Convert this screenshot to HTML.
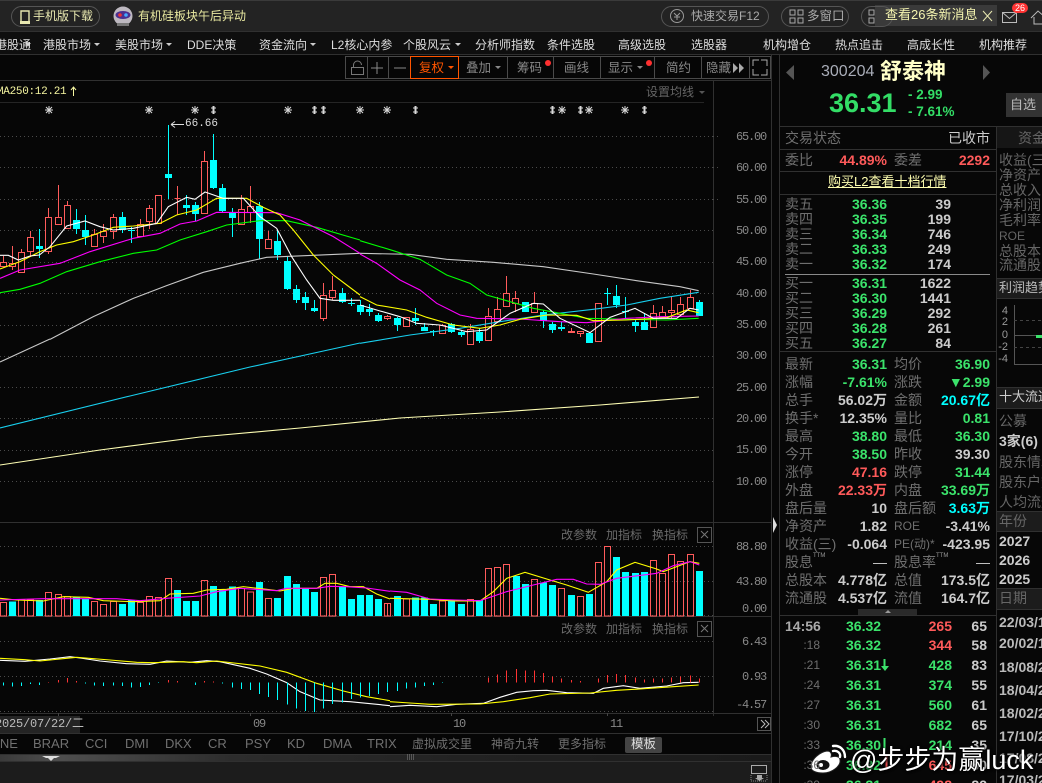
<!DOCTYPE html>
<html><head><meta charset="utf-8"><style>
html,body{margin:0;padding:0;background:#060606;width:1042px;height:783px;overflow:hidden}
#r{position:relative;width:1042px;height:783px;overflow:hidden;font-family:"Liberation Sans","WenQuanYi Zen Hei","Noto Sans CJK SC",sans-serif;font-size:14px;color:#ccc}
.a,.t span,.t b{position:absolute}
.t{position:absolute;left:0;top:0;width:1042px;height:783px;overflow:hidden}
.t span,.t b{line-height:16px;white-space:nowrap}
.n span{font-size:12px;color:#ddd;top:37px}
.tb span{font-size:12.5px;color:#888;top:60px}
.g{color:#6f6f6f}
.w{color:#ccc;font-weight:bold}
.gr{color:#3be36b;font-weight:bold}
.rd{color:#ff5a5a;font-weight:bold}
.cy{color:#0ff;font-weight:bold}
.ax span{font-family:"Liberation Mono",monospace;font-size:12px;letter-spacing:-1.2px;color:#888;text-align:right}
.p span{font-size:12px;color:#6a6a6a}
.tab span{font-size:13px;color:#707070;top:736px}
.c3 span{color:#666}
svg{position:absolute;left:0;top:0}
.pill{position:absolute;border:1px solid #555;border-radius:11px;height:19px;top:6px;box-sizing:content-box}
</style></head><body><div id="r">

<div class="a" style="left:0;top:0;width:1042px;height:31px;background:#232323"></div>
<div class="a" style="left:0;top:0;width:1042px;height:1px;background:#3a3a3a"></div>
<div class="a" style="left:0;top:32px;width:1042px;height:22px;background:#0e0e0e"></div>
<div class="a" style="left:0;top:761px;width:772px;height:22px;background:#1c1c1c"></div>
<div class="a" style="left:0;top:754px;width:772px;height:7px;background:linear-gradient(90deg,#3a3a3a,#4e4e4e 8%,#2c2c2c 30%,#222 60%,#1a1a1a)"></div>
<div class="a" style="left:780px;top:55px;width:262px;height:728px;background:#070707"></div>
<div class="a" style="left:996px;top:126px;width:46px;height:22px;background:#161616"></div>
<div class="a" style="left:997px;top:278px;width:45px;height:21px;background:#1c1c1c"></div>
<div class="a" style="left:997px;top:387px;width:45px;height:21px;background:#1c1c1c"></div>
<div class="a" style="left:997px;top:511px;width:45px;height:20px;background:#1c1c1c"></div>
<div class="a" style="left:997px;top:588px;width:45px;height:21px;background:#1c1c1c"></div>
<div class="a" style="left:858px;top:609px;width:59px;height:6px;background:#2a2a2a"></div>
<div class="a" style="left:1006px;top:93px;width:36px;height:24px;background:#333"></div>
<div class="a" style="left:0;top:716px;width:80px;height:17px;background:#242424"></div>
<div class="a" style="left:625px;top:737px;width:37px;height:16px;background:#444;border-radius:2px"></div>
<div class="a" style="left:875px;top:5px;width:122px;height:21px;background:#3a3a3a"></div>
<div class="pill" style="left:11px;width:87px"></div>
<div class="pill" style="left:661px;width:106px"></div>
<div class="pill" style="left:781px;width:66px"></div>
<div class="pill" style="left:861px;width:30px"></div>

<svg width="1042" height="783" viewBox="0 0 1042 783" fill="none">
<g stroke="#303030">
<path d="M0 31.5H1042M0 54.5H1042M0 80.5H771M0 522.5H771M0 616.5H771M0 713.5H771M0 733.5H771M0 754.5H771M0 761.5H771M771.5 55V783M779.5 55V783M779.5 126.5H1042M713.5 80V716"/>
<path d="M780 149.5H996M780 171.5H996M780 194.5H996M780 351.5H996M780 615.5H996M996.5 126V783M997 278.5H1042M997 298.5H1042M997 387.5H1042M997 408.5H1042M997 511.5H1042M997 531.5H1042M997 588.5H1042M997 609.5H1042"/>
</g>
<path d="M0 102.5H704" stroke="#252525"/>
<path d="M785 274.5H990" stroke="#8a8a8a"/>
<g stroke="#4a4a4a" stroke-dasharray="1 3">
<path d="M0 136.5H713M0 167.5H713M0 199.5H713M0 230.5H713M0 262.5H713M0 293.5H713M0 325.5H713M0 356.5H713M0 387.5H713M0 418.5H713M0 450.5H713M0 481.5H713M0 546.5H713M0 581.5H713M0 641.5H713M0 676.5H713M0 711.5H713M0 615.5H713"/>
<path d="M713 136.5H718M713 167.5H718M713 199.5H718"/>
</g>
<!-- toolbar boxes -->
<path d="M345.5 56.5H770.5V78.5H345.5ZM367.5 56V78M388.5 56V78M507.5 56V78M553.5 56V78M600.5 56V78M654.5 56V78M701.5 56V78M749.5 56V78" stroke="#4a4a4a"/>
<rect x="410.5" y="56.5" width="48" height="22" stroke="#ff5500" fill="#060606"/>
<!-- toolbar icons -->
<path d="M351.500 67.500h12v7h-12zM353.500 67v-2a4 4 0 0 1 8 0" stroke="#777"/>
<path d="M371 68h12M377 62v12M394 68h12" stroke="#888"/>
<circle cx="548" cy="63" r="3" fill="#ff3030"/><circle cx="649" cy="63" r="3" fill="#ff3030"/>
<path d="M448 66h6l-3 3z" fill="#ff5500"/>
<path d="M495 66h6l-3 3zM637 66h6l-3 3z" fill="#888"/>
<path d="M733 63l5 5-5 5zM739 63l5 5-5 5z" fill="#aaa"/>
<path d="M753 66v-6h6M767 66v-6h-6M753 69v6h6M767 69v6h-6" stroke="#aaa"/>
<path d="M25 43h6l-3 3zM94 43h6l-3 3zM166 43h6l-3 3zM310 43h6l-3 3zM455 43h6l-3 3z" fill="#ccc"/>
<path d="M699 91h6l-3 3z" fill="#555"/>
<!-- top bar icons -->
<path d="M21 11h8v12h-8z" stroke="#e8e8b0" stroke-width="1.4"/><path d="M20 21h10v3H20z" fill="#e8e8b0"/>
<circle cx="123" cy="16" r="9.5" fill="#bdb8c0"/><ellipse cx="123" cy="15" rx="7.5" ry="4" fill="#4a2f8f"/><circle cx="120" cy="15" r="1.8" fill="#e33"/><circle cx="126" cy="15" r="1.8" fill="#4af"/><path d="M117 23h12v3h-12z" fill="#777"/>
<circle cx="677" cy="16" r="6.5" stroke="#999"/><path d="M674 13l3 3 3-3M677 16v4M674 17h6" stroke="#999"/>
<path d="M790 10h5v5h-5zM798 10h5v5h-5zM790 18h5v5h-5zM798 18h5v5h-5z" stroke="#aaa"/>
<path d="M869 10h5v5h-5zM869 18h5v5h-5z" stroke="#aaa"/>
<path d="M983 11l9 10M992 11l-9 10" stroke="#e8e8b0"/>
<path d="M1002.5 12.5h14v10h-14zM1002.5 12.5l7 6 7-6" stroke="#bbb"/>
<rect x="1012" y="3" width="16" height="10" rx="5" fill="#f33"/>
<path d="M1031 18l7-7 8 7M1034 17v7h10" stroke="#bbb"/>
<!-- stock arrows -->
<path d="M794 65v15l-8-7.500zM983 65v15l7-7.500z" fill="#555"/>
<!-- star markers -->
<path stroke="#d8d8d8" d="M45 110h8M49 106v8M46 107l6 6M52 107l-6 6M145 110h8M149 106v8M146 107l6 6M152 107l-6 6M191 110h8M195 106v8M192 107l6 6M198 107l-6 6M284 110h8M288 106v8M285 107l6 6M291 107l-6 6M356 110h8M360 106v8M357 107l6 6M363 107l-6 6M383 110h8M387 106v8M384 107l6 6M390 107l-6 6M558 110h8M562 106v8M559 107l6 6M565 107l-6 6M585 110h8M589 106v8M586 107l6 6M592 107l-6 6M621 110h8M625 106v8M622 107l6 6M628 107l-6 6"/>
<path stroke="#d8d8d8" stroke-width="2" d="M213.500 106v8M314.500 106v8M323.500 106v8M415.500 106v8M552.500 106v8M580.500 106v8M644.500 106v8"/>
<path stroke="#d8d8d8" d="M211 108h5M211 112h5M312 108h5M312 112h5M321 108h5M321 112h5M413 108h5M413 112h5M550 108h5M550 112h5M578 108h5M578 112h5M642 108h5M642 112h5"/>
<path d="M73.500 96v-9M71 90l2.500-3 2.500 3" stroke="#f5f5a0"/>
<path d="M171 124.500h13M171 124.500l4-3M171 124.500l4 3" stroke="#ddd"/>

<!-- candles wicks -->
<path stroke="#ff5b5b" d="M3.500 256V267M12.500 246V270M21.500 249V273M30.500 231V257M48.500 208V254M58.500 185V225M67.500 201V229M94.500 229V247M103.500 224V243M113.500 214V239M140.500 219V237M149.500 205V229M158.500 195V224M177.500 186V215M204.500 151V214M241.500 195V225M250.500 186V223M268.500 231V249M323.500 283V321M332.500 276V300M387.500 315V320M406.500 317V327M442.500 324V334M470.500 324V345M488.500 308V340M497.500 297V322M506.500 276V307M515.500 291V312M534.500 292V313M571.500 328V333M580.500 331V337M598.500 303V342M653.500 305V328M662.500 306V318M671.500 297V318M680.500 297V315M690.500 290V309"/>
<path stroke="#ff5b5b" fill="#060606" d="M.5 262.500h6v4h-6zM9.500 263.500h6v3h-6zM18.500 252.500h6v20h-6zM27.500 237.500h6v14h-6zM45.500 217.500h6v34h-6zM55.500 217.500h6v7h-6zM64.500 205.500h6v23h-6zM91.500 234.500h6v12h-6zM100.500 231.500h6v5h-6zM110.500 217.500h6v14h-6zM137.500 224.500h6v12h-6zM146.500 208.500h6v13h-6zM155.500 195.500h6v28h-6zM174.500 198.500h6M201.500 161.500h6v52h-6zM238.500 209.500h6v15h-6zM247.500 206.500h6v6h-6zM265.500 239.500h6v9h-6zM320.500 295.500h6v23h-6zM329.500 290.500h6v7h-6zM384.500 316.500h6v2h-6zM403.500 317.500h6v9h-6zM439.500 325.500h6v8h-6zM467.500 329.500h6v15h-6zM485.500 316.500h6v24h-6zM494.500 309.500h6v12h-6zM503.500 293.500h6v13h-6zM512.500 298.500h6v5h-6zM531.500 303.500h6v9h-6zM568.500 331.500h6v1h-6zM577.500 331.500h6v2h-6zM595.500 303.500h6v38h-6zM650.500 313.500h6v14h-6zM659.500 312.500h6v5h-6zM668.500 310.500h6v2h-6zM677.500 304.500h6v10h-6zM687.500 297.500h6v11h-6z"/>
<path stroke="#0ff" d="M39.500 229V258M76.500 209V234M85.500 215V245M122.500 212V233M131.500 227V243M168.500 125V199M186.500 195V215M195.500 202V221M213.500 134V189M222.500 184V213M232.500 208V237M259.500 202V259M277.500 230V260M287.500 256V290M296.500 285V303M305.500 292V310M314.500 300V312M342.500 288V303M351.500 298V306M360.500 300V315M369.500 304V316M378.500 313V322M397.500 317V331M415.500 308V325M424.500 323V331M433.500 330V336M451.500 323V333M461.500 330V337M479.500 328V343M525.500 302V312M543.500 310V328M552.500 322V333M561.500 322V331M589.500 332V343M607.500 288V305M616.500 285V308M625.500 297V320M635.500 319V332M644.500 313V330M699.500 300V316M128 230.500h7M348 303.500h7M622 311.500h7"/>
<path fill="#0ff" d="M36 246h7v3h-7zM73 220h7v9h-7zM82 230h7v7h-7zM119 217h7v13h-7zM165 174h7v4h-7zM183 205h7v3h-7zM192 205h7v9h-7zM210 160h7v28h-7zM219 188h7v23h-7zM229 213h7v5h-7zM256 206h7v33h-7zM274 241h7v14h-7zM284 261h7v28h-7zM293 289h7v11h-7zM302 297h7v6h-7zM311 308h7v3h-7zM339 293h7v9h-7zM357 305h7v7h-7zM366 309h7v3h-7zM375 315h7v6h-7zM394 318h7v7h-7zM412 318h7v3h-7zM421 327h7v4h-7zM430 331h7v1h-7zM448 324h7v8h-7zM458 332h7v3h-7zM476 332h7v9h-7zM522 302h7v10h-7zM540 312h7v9h-7zM549 324h7v6h-7zM558 327h7v2h-7zM586 333h7v10h-7zM604 293h7v1h-7zM613 296h7v9h-7zM632 322h7v4h-7zM641 322h7v8h-7zM696 302h7v14h-7z"/>

<!-- MA lines -->
<g stroke-width="1.1">
<polyline stroke="#c8c8c8" points="0,362 50,339"/>
<polyline stroke="#ffffb4" points="0,465 100,450 200,437 300,428 400,418 500,412 600,405 699,397"/>
<polyline stroke="#18cfee" points="0,428 130,396 250,367 360,343"/>
<g transform="translate(0,120) scale(.33333)" stroke-width="3.3">
<polyline stroke="#c8c8c8" points="150,658 280,590 400,535 500,497 610,457 720,430 800,412 940,406 1080,400"/>
<polyline stroke="#0f0" points="0,518 60,508 120,490 200,455 300,425 400,400 470,390 540,360 620,335 680,315 780,302 860,302 950,322 1080,360"/>
<polyline stroke="#f0f" points="0,475 60,450 180,430 270,395 400,355 480,340 540,312 590,303 650,277 830,278 900,300 1000,350 1080,400"/>
<polyline stroke="#ff0" points="0,447 60,425 120,395 170,375 220,365 280,345 340,322 400,318 480,310 530,285 590,270 650,235 740,235 790,262 840,285 880,330 940,405 1000,465 1080,525"/>
<polyline stroke="#fff" points="0,406 25,406 55,420 90,408 118,405 150,380 200,318 255,303 300,320 340,330 400,325 470,310 505,260 560,232 585,238 615,216 670,235 730,235 780,290 830,325 875,410 920,480 960,535 1000,541 1080,541"/>
</g>
<g transform="translate(360,230) scale(.33333)" stroke-width="3.3">
<polyline stroke="#c8c8c8" points="0,70 150,73 260,88 400,97 550,110 700,132 830,152 960,170 1016,182"/>
<polyline stroke="#18cfee" points="0,340 150,315 300,295 420,275 550,255 700,238 800,225 900,205 1016,187"/>
<polyline stroke="#0f0" points="0,32 100,62 180,88 260,135 330,160 380,195 450,215 520,235 600,250 680,265 800,268 920,270 1016,265"/>
<polyline stroke="#f0f" points="0,72 50,100 120,150 180,180 230,220 300,255 350,265 480,267 600,275 680,278 800,265 900,260 1016,258"/>
<polyline stroke="#ff0" points="0,200 50,225 140,240 200,262 280,285 360,295 420,285 480,268 560,255 650,256 700,272 800,270 920,263 980,240 1016,248"/>
<polyline stroke="#fff" points="0,225 50,240 120,260 170,280 240,285 320,305 380,300 450,250 520,220 550,222 600,265 690,308 750,262 825,235 880,265 950,265 990,235 1016,240"/>
</g>
</g>

<!-- volume + macd left -->
<g transform="translate(0,520) scale(.33333)">
<path fill="#0ff" shape-rendering="crispEdges" d="M27 245h21V288H27zM108 240h21V288h-21zM219 232h21V288h-21zM246 235h21V288h-21zM357 252h21V288h-21zM384 240h21V288h-21zM522 210h21V288h-21zM549 243h21V288h-21zM576 243h21V288h-21zM630 198h21V288h-21zM657 207h21V288h-21zM687 199h21V288h-21zM768 186h21V288h-21zM822 234h21V288h-21zM852 168h21V288h-21zM879 192h21V288h-21zM906 207h21V288h-21zM933 216h21V288h-21zM1017 200h21V288h-21zM1044 237h21V288h-21zM1071 225h21V288h-21zM1098 225h21V288h-21zM1125 237h21V288h-21z"/>
<path stroke="#ff5b5b" stroke-width="3" shape-rendering="crispEdges" d="M1 247h18V288H1zM55 240h18V288H55zM82 240h18V288H82zM136 217h18V288h-18zM166 223h18V288h-18zM193 230h18V288h-18zM274 245h18V288h-18zM301 253h18V288h-18zM331 245h18V288h-18zM412 248h18V288h-18zM439 230h18V288h-18zM466 232h18V288h-18zM496 175h18V288h-18zM604 181h18V288h-18zM715 205h18V288h-18zM742 216h18V288h-18zM796 235h18V288h-18zM961 172h18V288h-18zM988 163h18V288h-18zM1153 250h18V288h-18z"/>
<g stroke-width="3.3">
<polyline stroke="#ff0" points="0,235 50,240 130,243 190,230 265,232 310,242 400,245 480,242 510,222 580,220 620,210 680,208 730,200 800,208 840,213 880,205 950,205 975,190 1010,190 1050,200 1090,200 1130,222 1170,237"/>
<polyline stroke="#f0f" points="0,240 130,236 350,236 420,242 500,235 600,228 650,215 720,205 830,212 860,205 950,205 990,199 1040,200 1100,204 1170,214"/>
<polyline stroke="#fff" points="0,421 75,424 150,417 210,410 240,414 300,423 380,431 450,433 500,423 570,427 620,422 660,425 750,445 800,462 860,488 900,515 960,540 1050,545 1170,557"/>
<polyline stroke="#ff0" points="0,415 75,419 120,423 230,412 330,420 410,427 460,428 550,425 590,428 650,423 780,438 860,457 950,490 1030,513 1100,530 1170,542"/>
</g>
<path stroke="#0ff" stroke-width="3" shape-rendering="crispEdges" d="M10 487V497M37 487V500M64 487V498M91 487V492M118 487V495M256 487V490M283 487V496M310 487V498M340 487V496M367 487V498M394 487V503M421 487V501M448 487V495M475 487V489M586 487V495M667 487V491M697 487V503M724 487V507M751 487V510M778 487V522M805 487V531M832 487V540M862 487V554M889 487V566M916 487V573M943 487V576M970 487V565M997 487V552M1027 487V547M1054 487V537M1081 487V532M1108 487V528M1135 487V522M1162 487V516"/>
<path stroke="#f33" stroke-width="3" shape-rendering="crispEdges" d="M145 486V488M175 480V488M202 474V488M229 483V488M505 480V488M532 483V488M613 483V488M640 484V488"/>
</g>
<!-- volume + macd right -->
<g transform="translate(390,520) scale(.33333)">
<path fill="#0ff" shape-rendering="crispEdges" d="M12 228h21V288H12zM66 232h21V288H66zM93 233h21V288H93zM120 252h21V288h-21zM174 240h21V288h-21zM204 252h21V288h-21zM258 240h21V288h-21zM369 168h21V288h-21zM396 192h21V288h-21zM450 187h21V288h-21zM477 195h21V288h-21zM534 225h21V288h-21zM588 222h21V288h-21zM669 111h21V288h-21zM696 156h21V288h-21zM726 159h21V288h-21zM753 156h21V288h-21zM918 153h21V288h-21z"/>
<path stroke="#ff5b5b" stroke-width="3" shape-rendering="crispEdges" d="M-8 250h10V288H-8zM40 237h18V288H40zM148 243h18V288h-18zM232 238h18V288h-18zM286 145h18V288h-18zM313 142h18V288h-18zM340 133h18V288h-18zM424 178h18V288h-18zM505 205h18V288h-18zM562 229h18V288h-18zM616 127h18V288h-18zM643 79h18V288h-18zM781 121h18V288h-18zM808 160h18V288h-18zM835 103h18V288h-18zM862 124h18V288h-18zM892 103h18V288h-18z"/>
<g stroke-width="3.3">
<polyline stroke="#ff0" points="0,235 120,238 190,243 270,243 310,215 350,175 405,157 480,180 530,195 595,217 650,185 680,150 735,127 800,147 820,155 900,125 928,130"/>
<polyline stroke="#f0f" points="0,213 50,217 120,237 200,240 270,242 350,215 430,195 500,178 550,178 590,192 630,193 680,175 800,160 850,137 900,125 928,135"/>
<polyline stroke="#fff" points="0,560 60,556 140,560 200,553 280,550 330,532 380,517 430,512 470,511 530,518 610,520 640,505 700,497 750,505 830,498 880,488 926,487"/>
<polyline stroke="#ff0" points="0,545 60,549 120,553 270,552 340,545 420,533 480,522 600,519 680,511 750,507 850,500 926,495"/>
</g>
<path stroke="#0ff" stroke-width="3" shape-rendering="crispEdges" d="M22 487V513M49 487V505M76 487V502M103 487V498M130 487V495M157 487V489M184 487V488"/>
<path stroke="#f33" stroke-width="3" shape-rendering="crispEdges" d="M241 487V488M268 487V488M295 473V488M322 464V488M349 452V488M379 447V488M406 452V488M433 452V488M460 459V488M487 470V488M514 476V488M544 480V488M571 483V488M625 476V488M652 465V488M679 462V488M706 465V488M736 473V488M763 479V488M790 476V488M817 476V488M844 473V488M871 470V488M901 467V488M928 475V488"/>
</g>
<!-- panel buttons -->
<path stroke="#555" d="M697.500 527.500h14v15h-14zM697.500 621.500h14v15h-14zM757.500 717.500h13v13h-13z"/>
<path stroke="#777" d="M701 531l7 7M708 531l-7 7M701 625l7 7M708 625l-7 7"/>
<path stroke="#bbb" d="M761 720l4 4-4 4M765 720l4 4-4 4"/>
<path stroke="#444" d="M58.500 713v3M250.500 713v3M451.500 713v3M607.500 713v3"/>
<!-- misc icons -->
<path d="M42 756h18l-4 2h-2l-3 3-3-3h-2z" fill="#ddd"/>
<path stroke="#888" stroke-dasharray="1 1" d="M407 755h8M407 757h8M407 759h8"/>
<path d="M773 517l4 8-4 8z" fill="#ddd"/>
<path d="M885 613l3-3 3 3z" fill="#999"/>
<path stroke="#aaa" d="M751.500 765.500h15v8h-15z"/>
<path stroke="#888" stroke-dasharray="1 1" d="M751 781h16M751 775v6M767 775v6"/>
<path d="M757 775h5v3h2l-4.500 3-4.500-3h2z" fill="#aaa"/>
<path d="M884.500 659v10" stroke="#3be36b" stroke-width="2"/><path d="M881 666l4 5 4-5z" fill="#3be36b"/>
<path d="M884.500 738v14" stroke="#3be36b" stroke-width="2"/>
<path d="M886.500 756v14" stroke="#ff5a5a" stroke-width="2"/>
<!-- mini chart -->
<path stroke="#555" d="M1014.500 305V364.500H1042"/>
<path stroke="#444" stroke-dasharray="3 3" d="M1014 320.500h28M1014 347.500h28"/>
<path stroke="#555" d="M1014 335.500h28"/>
<path d="M1036 335h6v3h-6z" fill="#3be36b"/>
<!-- weibo -->
<g transform="translate(808,742)">
<path d="M3 25c0-8 9-15 16-16 4 0 5 3 4 6 4-1 9-1 9 3 1 6-8 13-17 13-7 0-12-2-12-6z" fill="#fff" stroke="#222"/>
<ellipse cx="15" cy="23" rx="6.500" ry="5" fill="#111"/><circle cx="13" cy="23" r="2" fill="#fff"/>
<path d="M25 9c4-1 8 2 7 6M25 4c7-1 12 4 12 11" stroke="#fff" stroke-width="2.400" stroke-linecap="round"/>
</g>
</svg>

<div class="t n">
<span style="left:-5px">港股通</span><span style="left:43px">港股市场</span><span style="left:115px">美股市场</span><span style="left:187px">DDE决策</span><span style="left:259px">资金流向</span><span style="left:331px">L2核心内参</span><span style="left:403px">个股风云</span><span style="left:475px">分析师指数</span><span style="left:547px">条件选股</span><span style="left:618px">高级选股</span><span style="left:691px">选股器</span><span style="left:763px">机构增仓</span><span style="left:835px">热点追击</span><span style="left:907px">高成长性</span><span style="left:979px">机构推荐</span>
</div>
<div class="t">
<span style="left:33px;top:8px;font-size:12px;color:#e8e8b0">手机版下载</span>
<span style="left:138px;top:8px;font-size:12px;color:#e8e8a0">有机硅板块午后异动</span>
<span style="left:691px;top:8px;font-size:12px;color:#aaa">快速交易F12</span>
<span style="left:807px;top:8px;font-size:12.5px;color:#aaa">多窗口</span>
<span style="left:885px;top:7px;font-size:13px;color:#f5f5b0">查看26条新消息</span>
<span style="left:1012px;top:0;font-size:9px;color:#fff;width:16px;text-align:center">26</span>
</div>
<div class="t tb">
<span style="left:419px;color:#ff5500">复权</span><span style="left:466px">叠加</span><span style="left:517px">筹码</span><span style="left:564px">画线</span><span style="left:608px">显示</span><span style="left:666px">简约</span><span style="left:706px">隐藏</span>
</div>
<div class="t">
<span style="left:-3px;top:84px;font-family:'Liberation Mono',monospace;font-size:11px;color:#f5f5a0;letter-spacing:-.3px">MA250:12.21</span>
<span style="left:646px;top:84px;font-size:12px;color:#666">设置均线</span>
<span style="left:185px;top:116px;font-family:'Liberation Mono',monospace;font-size:11px;color:#ddd">66.66</span>
</div>
<div class="t ax">
<span style="right:276px;top:129px">65.00</span><span style="right:276px;top:160px">60.00</span><span style="right:276px;top:192px">55.00</span><span style="right:276px;top:223px">50.00</span><span style="right:276px;top:254px">45.00</span><span style="right:276px;top:286px">40.00</span><span style="right:276px;top:317px">35.00</span><span style="right:276px;top:348px">30.00</span><span style="right:276px;top:380px">25.00</span><span style="right:276px;top:411px">20.00</span><span style="right:276px;top:442px">15.00</span><span style="right:276px;top:474px">10.00</span>
<span style="right:276px;top:539px">88.80</span><span style="right:276px;top:574px">43.80</span><span style="right:276px;top:601px">0.00</span><span style="right:276px;top:634px">6.43</span><span style="right:276px;top:669px">0.93</span><span style="right:276px;top:697px">-4.57</span>
<span style="left:-5px;top:716px;color:#bbb;letter-spacing:-.2px">2025/07/22/二</span>
<span style="left:253px;top:716px">09</span><span style="left:453px;top:716px">10</span><span style="left:610px;top:716px">11</span>
</div>
<div class="t p">
<span style="left:561px;top:527px">改参数</span><span style="left:606px;top:527px">加指标</span><span style="left:652px;top:527px">换指标</span>
<span style="left:561px;top:621px">改参数</span><span style="left:606px;top:621px">加指标</span><span style="left:652px;top:621px">换指标</span>
</div>
<div class="t tab">
<span style="left:-11px">LINE</span><span style="left:33px">BRAR</span><span style="left:85px">CCI</span><span style="left:125px">DMI</span><span style="left:165px">DKX</span><span style="left:208px">CR</span><span style="left:245px">PSY</span><span style="left:287px">KD</span><span style="left:323px">DMA</span><span style="left:367px">TRIX</span><span style="left:412px;font-size:12px">虚拟成交里</span><span style="left:491px;font-size:12px">神奇九转</span><span style="left:558px;font-size:12px">更多指标</span><span style="left:631px;font-size:12.5px;color:#ddd">模板</span>
</div>

<!-- stock header -->
<div class="t">
<span style="left:821px;top:64px;font-size:16px;color:#a9adb8">300204</span>
<b style="left:880px;top:64px;font-size:22px;line-height:16px;color:#ffffc8;font-weight:bold">舒泰神</b>
<span style="left:829px;top:95px;font-size:27px;color:#33dd66;font-weight:bold">36.31</span>
<span style="left:908px;top:87px;font-size:13.5px;color:#33dd66;font-weight:bold">- 2.99</span>
<span style="left:908px;top:104px;font-size:13.5px;color:#33dd66;font-weight:bold">- 7.61%</span>
<span style="left:1010px;top:97px;font-size:13px;color:#bbb">自选</span>
</div>

<!-- quote col -->
<div class="t">
<span class="g" style="left:785px;top:130px">交易状态</span><span style="right:52px;top:130px;color:#ccc">已收市</span>
<span class="g" style="left:785px;top:152px">委比</span><span class="rd" style="right:155px;top:152px">44.89%</span><span class="g" style="left:894px;top:152px">委差</span><span class="rd" style="right:52px;top:152px">2292</span>
<span style="left:828px;top:174px;font-size:13px;color:#ffffb0;text-decoration:underline">购买L2查看十档行情</span>

<span class="g" style="left:785px;top:196px">卖五</span><span class="g" style="left:785px;top:211px">卖四</span><span class="g" style="left:785px;top:226px">卖三</span><span class="g" style="left:785px;top:241px">卖二</span><span class="g" style="left:785px;top:256px">卖一</span>
<span class="gr" style="left:852px;top:196px">36.36</span><span class="gr" style="left:852px;top:211px">36.35</span><span class="gr" style="left:852px;top:226px">36.34</span><span class="gr" style="left:852px;top:241px">36.33</span><span class="gr" style="left:852px;top:256px">36.32</span>
<span class="w" style="right:91px;top:196px">39</span><span class="w" style="right:91px;top:211px">199</span><span class="w" style="right:91px;top:226px">746</span><span class="w" style="right:91px;top:241px">249</span><span class="w" style="right:91px;top:256px">174</span>

<span class="g" style="left:785px;top:275px">买一</span><span class="g" style="left:785px;top:290px">买二</span><span class="g" style="left:785px;top:305px">买三</span><span class="g" style="left:785px;top:320px">买四</span><span class="g" style="left:785px;top:335px">买五</span>
<span class="gr" style="left:852px;top:275px">36.31</span><span class="gr" style="left:852px;top:290px">36.30</span><span class="gr" style="left:852px;top:305px">36.29</span><span class="gr" style="left:852px;top:320px">36.28</span><span class="gr" style="left:852px;top:335px">36.27</span>
<span class="w" style="right:91px;top:275px">1622</span><span class="w" style="right:91px;top:290px">1441</span><span class="w" style="right:91px;top:305px">292</span><span class="w" style="right:91px;top:320px">261</span><span class="w" style="right:91px;top:335px">84</span>

<span class="g" style="left:785px;top:356px">最新</span><span class="gr" style="right:155px;top:356px">36.31</span><span class="g" style="left:894px;top:356px">均价</span><span class="gr" style="right:52px;top:356px">36.90</span>
<span class="g" style="left:785px;top:374px">涨幅</span><span class="gr" style="right:155px;top:374px">-7.61%</span><span class="g" style="left:894px;top:374px">涨跌</span><span class="gr" style="right:52px;top:374px">▼2.99</span>
<span class="g" style="left:785px;top:392px">总手</span><span class="w" style="right:155px;top:392px">56.02万</span><span class="g" style="left:894px;top:392px">金额</span><span class="cy" style="right:52px;top:392px">20.67亿</span>
<span class="g" style="left:785px;top:410px">换手*</span><span class="w" style="right:155px;top:410px">12.35%</span><span class="g" style="left:894px;top:410px">量比</span><span class="gr" style="right:52px;top:410px">0.81</span>
<span class="g" style="left:785px;top:428px">最高</span><span class="gr" style="right:155px;top:428px">38.80</span><span class="g" style="left:894px;top:428px">最低</span><span class="gr" style="right:52px;top:428px">36.30</span>
<span class="g" style="left:785px;top:446px">今开</span><span class="gr" style="right:155px;top:446px">38.50</span><span class="g" style="left:894px;top:446px">昨收</span><span class="w" style="right:52px;top:446px">39.30</span>
<span class="g" style="left:785px;top:464px">涨停</span><span class="rd" style="right:155px;top:464px">47.16</span><span class="g" style="left:894px;top:464px">跌停</span><span class="gr" style="right:52px;top:464px">31.44</span>
<span class="g" style="left:785px;top:482px">外盘</span><span class="rd" style="right:155px;top:482px">22.33万</span><span class="g" style="left:894px;top:482px">内盘</span><span class="gr" style="right:52px;top:482px">33.69万</span>
<span class="g" style="left:785px;top:500px">盘后量</span><span class="w" style="right:155px;top:500px">10</span><span class="g" style="left:894px;top:500px">盘后额</span><span class="cy" style="right:52px;top:500px">3.63万</span>
<span class="g" style="left:785px;top:518px">净资产</span><span class="w" style="right:155px;top:518px">1.82</span><span class="g" style="left:894px;top:518px;font-size:12px">ROE</span><span class="w" style="right:52px;top:518px">-3.41%</span>
<span class="g" style="left:785px;top:536px">收益(三)</span><span class="w" style="right:155px;top:536px">-0.064</span><span class="g" style="left:894px;top:536px;font-size:12px">PE(动)*</span><span class="w" style="right:52px;top:536px">-423.95</span>
<span class="g" style="left:785px;top:554px">股息</span><span class="w" style="right:155px;top:554px;font-weight:normal">—</span><span class="g" style="left:894px;top:554px">股息率</span><span class="w" style="right:52px;top:554px;font-weight:normal">—</span>
<span style="left:813px;top:548px;font-size:6px;color:#999">TTM</span><span style="left:936px;top:548px;font-size:6px;color:#999">TTM</span>
<span class="g" style="left:785px;top:572px">总股本</span><span class="w" style="right:155px;top:572px">4.778亿</span><span class="g" style="left:894px;top:572px">总值</span><span class="w" style="right:52px;top:572px">173.5亿</span>
<span class="g" style="left:785px;top:590px">流通股</span><span class="w" style="right:155px;top:590px">4.537亿</span><span class="g" style="left:894px;top:590px">流值</span><span class="w" style="right:52px;top:590px">164.7亿</span>

<span class="w" style="left:785px;top:618px;color:#aaa">14:56</span><span class="gr" style="left:846px;top:618px">36.32</span><span class="rd" style="right:90px;top:618px">265</span><span class="w" style="right:55px;top:618px">65</span>
<span class="g" style="right:222px;top:637px;font-size:12px">:18</span><span class="gr" style="left:846px;top:637px">36.32</span><span class="rd" style="right:90px;top:637px">344</span><span class="w" style="right:55px;top:637px">58</span>
<span class="g" style="right:222px;top:657px;font-size:12px">:21</span><span class="gr" style="left:846px;top:657px">36.31</span><span class="gr" style="right:90px;top:657px">428</span><span class="w" style="right:55px;top:657px">83</span>
<span class="g" style="right:222px;top:677px;font-size:12px">:24</span><span class="gr" style="left:846px;top:677px">36.31</span><span class="gr" style="right:90px;top:677px">374</span><span class="w" style="right:55px;top:677px">55</span>
<span class="g" style="right:222px;top:697px;font-size:12px">:27</span><span class="gr" style="left:846px;top:697px">36.31</span><span class="gr" style="right:90px;top:697px">560</span><span class="w" style="right:55px;top:697px">61</span>
<span class="g" style="right:222px;top:717px;font-size:12px">:30</span><span class="gr" style="left:846px;top:717px">36.31</span><span class="gr" style="right:90px;top:717px">682</span><span class="w" style="right:55px;top:717px">65</span>
<span class="g" style="right:222px;top:737px;font-size:12px">:33</span><span class="gr" style="left:846px;top:737px">36.30</span><span class="gr" style="right:90px;top:737px">214</span><span class="w" style="right:55px;top:737px">35</span>
<span class="g" style="right:222px;top:757px;font-size:12px">:36</span><span class="gr" style="left:846px;top:757px">36.32</span><span class="rd" style="right:90px;top:757px">645</span><span class="w" style="right:55px;top:757px">60</span>
<span class="g" style="right:222px;top:777px;font-size:12px">:39</span><span class="gr" style="left:846px;top:777px">36.31</span><span class="rd" style="right:90px;top:777px">498</span><span class="w" style="right:55px;top:777px">82</span>
</div>

<!-- third col -->
<div class="t c3">
<span style="left:1018px;top:130px">资金</span>
<span style="left:999px;top:152px">收益(三)</span><span style="left:999px;top:167px">净资产</span><span style="left:999px;top:182px">总收入</span><span style="left:999px;top:197px">净利润</span><span style="left:999px;top:212px">毛利率</span><span style="left:999px;top:228px;font-size:12px">ROE</span><span style="left:999px;top:243px">总股本</span><span style="left:999px;top:257px">流通股</span>
<span style="left:999px;top:280px;font-size:13px;color:#bbb">利润趋势</span>
<span style="right:34px;top:303px;font-size:11px;color:#999">4</span><span style="right:34px;top:314px;font-size:11px;color:#999">2</span><span style="right:34px;top:327px;font-size:11px;color:#999">0</span><span style="right:34px;top:339px;font-size:11px;color:#999">-2</span><span style="right:34px;top:351px;font-size:11px;color:#999">-4</span>
<span style="left:999px;top:389px;font-size:13px;color:#ccc">十大流通股东</span>
<span style="left:999px;top:413px">公募</span>
<span style="left:999px;top:433px;color:#ccc;font-weight:bold">3家(6)</span>
<span style="left:999px;top:454px">股东情况</span><span style="left:999px;top:474px">股东户数</span><span style="left:999px;top:494px">人均流通</span>
<span style="left:999px;top:513px">年份</span>
<span style="left:999px;top:533px;color:#ccc;font-weight:bold">2027</span><span style="left:999px;top:552px;color:#ccc;font-weight:bold">2026</span><span style="left:999px;top:571px;color:#ccc;font-weight:bold">2025</span>
<span style="left:999px;top:590px">日期</span>
<span style="left:999px;top:614px;color:#bbb;font-weight:bold">22/03/17</span><span style="left:999px;top:635px;color:#bbb;font-weight:bold">20/02/17</span><span style="left:999px;top:659px;color:#bbb;font-weight:bold">18/08/21</span><span style="left:999px;top:682px;color:#bbb;font-weight:bold">18/04/21</span><span style="left:999px;top:705px;color:#bbb;font-weight:bold">18/02/21</span><span style="left:999px;top:728px;color:#bbb;font-weight:bold">17/10/21</span><span style="left:999px;top:750px;color:#bbb;font-weight:bold">17/08/21</span><span style="left:999px;top:772px;color:#bbb;font-weight:bold">17/03/21</span>
</div>

<div class="t">
<span style="left:850px;top:752px;font-size:27px;color:#fff;text-shadow:0 0 3px #000,1px 1px 2px #000">@步步为赢luck</span>
</div>
</div></body></html>
